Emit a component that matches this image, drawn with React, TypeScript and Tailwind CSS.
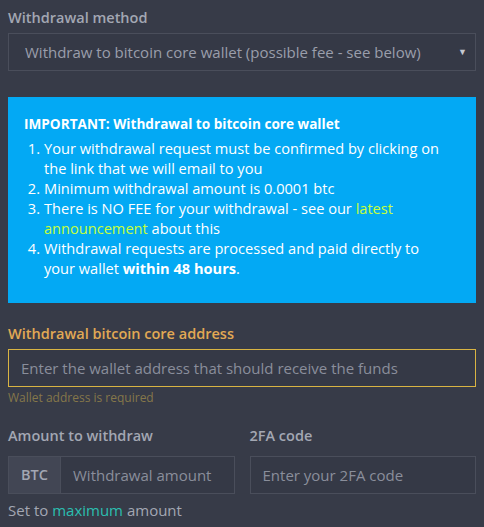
import React from 'react';

const font = { fontFamily: '"Open Sans", "Liberation Sans", sans-serif' };

const App = () => {
  return (
    <div className="w-[484px] h-[527px] bg-[#373b48] px-2 pt-[8px] overflow-hidden" style={font}>
      {/* Withdrawal method */}
      <label className="block text-[14.5px] font-semibold text-[#a3a7b3] leading-[20px]">Withdrawal method</label>
      <div className="mt-[5px] h-[38px] border border-[#4a4e5b] bg-[#353946] flex items-center justify-between pl-4 pr-2">
        <span className="text-[15px] text-[#9a9eab]">Withdraw to bitcoin core wallet (possible fee - see below)</span>
        <span className="text-[9px] text-[#c5c8d0]">▼</span>
      </div>

      {/* Info box */}
      <div className="mt-[26px] h-[206px] bg-[#03a9f4] text-white pl-4 pr-[30px] pt-[17px]">
        <p className="text-[13.6px] font-bold leading-[20px]">IMPORTANT: Withdrawal to bitcoin core wallet</p>
        <ol className="mt-[4px] text-[14.6px] leading-[20px]">
          <li className="flex">
            <span className="w-[20px] shrink-0 text-right pr-[4px]">1.</span>
            <span>Your withdrawal request must be confirmed by clicking on the link that we will email to you</span>
          </li>
          <li className="flex">
            <span className="w-[20px] shrink-0 text-right pr-[4px]">2.</span>
            <span>Minimum withdrawal amount is 0.0001 btc</span>
          </li>
          <li className="flex">
            <span className="w-[20px] shrink-0 text-right pr-[4px]">3.</span>
            <span>
              There is NO FEE for your withdrawal - see our <span className="text-[#c6ff3a]">latest announcement</span> about this
            </span>
          </li>
          <li className="flex">
            <span className="w-[20px] shrink-0 text-right pr-[4px]">4.</span>
            <span>
              Withdrawal requests are processed and paid directly to your wallet <b>within 48 hours</b>.
            </span>
          </li>
        </ol>
      </div>

      {/* Address */}
      <label className="block mt-[21px] text-[14.5px] font-semibold text-[#e2a954] leading-[20px]">Withdrawal bitcoin core address</label>
      <div className="mt-[5px] h-[38px] border border-[#d9b443] bg-[#353946] flex items-center px-3">
        <span className="text-[15px] text-[#8a8e9b]">Enter the wallet address that should receive the funds</span>
      </div>
      <p className="mt-[3px] text-[12px] text-[#85774a] leading-[16px]">Wallet address is required</p>

      {/* Amount + 2FA */}
      <div className="mt-[20px] grid grid-cols-2 gap-[15px]">
        <div>
          <label className="block text-[14.5px] font-semibold text-[#a3a7b3] leading-[20px]">Amount to withdraw</label>
          <div className="mt-[10px] h-[38px] border border-[#4a4e5b] flex">
            <div className="w-[52px] bg-[#424654] border-r border-[#4a4e5b] flex items-center justify-center text-[14.5px] font-semibold text-[#a3a7b3]">BTC</div>
            <div className="flex-1 bg-[#353946] flex items-center px-3 text-[15px] text-[#8a8e9b]">Withdrawal amount</div>
          </div>
          <p className="mt-[6px] text-[15px] text-[#a3a7b3] leading-[20px]">
            Set to <span className="text-[#2bbfb0]">maximum</span> amount
          </p>
        </div>
        <div>
          <label className="block text-[14.5px] font-semibold text-[#a3a7b3] leading-[20px]">2FA code</label>
          <div className="mt-[10px] h-[38px] border border-[#4a4e5b] bg-[#353946] flex items-center px-3 text-[15px] text-[#8a8e9b]">Enter your 2FA code</div>
        </div>
      </div>
    </div>
  );
};

export default App;
